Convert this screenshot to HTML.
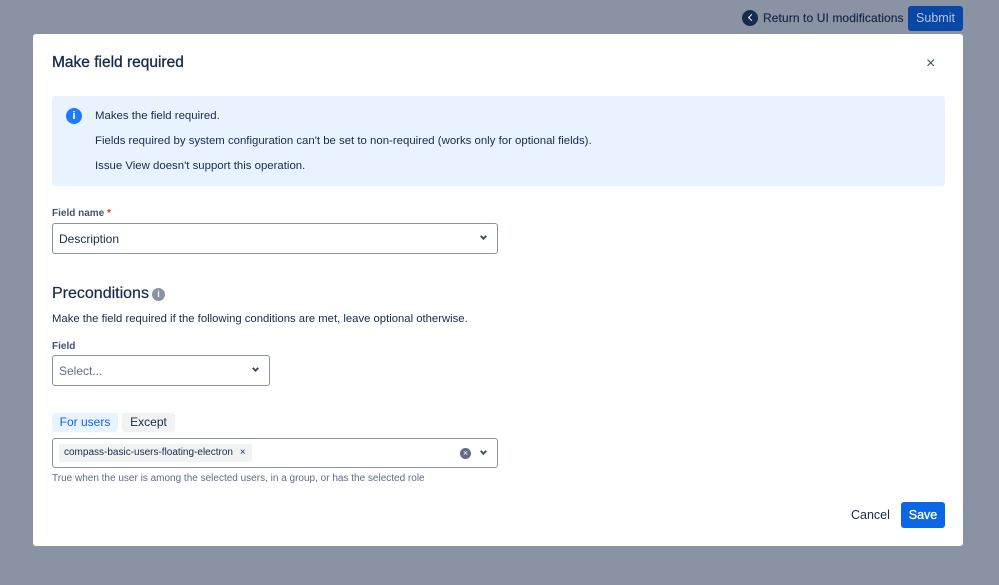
<!DOCTYPE html>
<html><head><style>
*{box-sizing:border-box;margin:0;padding:0}
body{width:999px;height:585px;background:#8993a4;font-family:"Liberation Sans",sans-serif;color:#172b4d;position:relative;overflow:hidden}
.abs{position:absolute}
.modal{left:33px;top:34px;width:930px;height:512px;background:#fff;border-radius:3px}
.sel{border:1px solid #8993a4;border-radius:3px;background:#fff}
.chev{position:absolute;width:5px;height:5px;border-right:2px solid #42526e;border-bottom:2px solid #42526e;transform:rotate(45deg)}
</style></head><body>
<div class="abs" style="left:742px;top:10px;width:16px;height:16px;border-radius:50%;background:#172b4d"></div>
<div class="abs" style="left:749px;top:15px;width:5px;height:5px;border-left:1.6px solid #fff;border-bottom:1.6px solid #fff;transform:rotate(45deg)"></div>
<div class="abs" style="left:763px;top:11px;font-size:12px;color:#172b4d;letter-spacing:0.1px;-webkit-text-stroke:0.2px #172b4d">Return to UI modifications</div>
<div class="abs" style="left:908px;top:6px;width:55px;height:25px;background:#0747a6;border-radius:3px;color:#b3c5e0;font-size:12.5px;text-align:center;line-height:25px">Submit</div>
<div class="abs modal">
 <div class="abs" style="left:19px;top:20px;font-size:15.5px;-webkit-text-stroke:0.35px #172b4d">Make field required</div>
 <div class="abs" style="left:893px;top:21px;font-size:16px;color:#42526e">×</div>
 <div class="abs" style="left:19px;top:62px;width:893px;height:90px;background:#e9f2ff;border-radius:3px">
  <div class="abs" style="left:14px;top:12px;width:16px;height:16px;border-radius:50%;background:#1d7afc;color:#fff;font-size:11px;font-weight:bold;text-align:center;line-height:16px">i</div>
  <div class="abs" style="left:43px;top:8px;font-size:11.4px;line-height:25px">Makes the field required.<br>Fields required by system configuration can't be set to non-required (works only for optional fields).<br>Issue View doesn't support this operation.</div>
 </div>
 <div class="abs" style="left:19px;top:174px;font-size:10px;font-weight:bold;color:#42526e">Field name <span style="color:#de350b">*</span></div>
 <div class="abs sel" style="left:19px;top:189px;width:446px;height:31px"><div class="abs" style="left:6px;top:8px;font-size:12px">Description</div><div class="chev" style="left:428px;top:10px"></div></div>
 <div class="abs" style="left:19px;top:251px;font-size:16px;-webkit-text-stroke:0.2px #172b4d">Preconditions</div>
 <div class="abs" style="left:119px;top:254px;width:13px;height:13px;border-radius:50%;background:#8993a4;color:#fff;font-size:9px;font-weight:bold;text-align:center;line-height:13px">i</div>
 <div class="abs" style="left:19px;top:279px;font-size:11.3px">Make the field required if the following conditions are met, leave optional otherwise.</div>
 <div class="abs" style="left:19px;top:307px;font-size:10px;font-weight:bold;color:#42526e">Field</div>
 <div class="abs sel" style="left:19px;top:321px;width:218px;height:31px"><div class="abs" style="left:6px;top:8px;font-size:12px;color:#5e6c84">Select...</div><div class="chev" style="left:200px;top:10px"></div></div>
 <div class="abs" style="left:19px;top:379px;width:66px;height:19px;background:#e9f2ff;border-radius:3px;color:#0c66e4;font-size:12px;text-align:center;line-height:19px">For users</div>
 <div class="abs" style="left:89px;top:379px;width:53px;height:19px;background:#f1f2f4;border-radius:3px;font-size:12px;text-align:center;line-height:19px">Except</div>
 <div class="abs sel" style="left:19px;top:404px;width:446px;height:30px">
  <div class="abs" style="left:6px;top:5px;width:193px;height:18px;background:#f1f2f4;border-radius:2px;font-size:10px;line-height:18px;padding-left:5px">compass-basic-users-floating-electron <span style="margin-left:4px">×</span></div>
  <div class="abs" style="left:407px;top:9px;width:11px;height:11px;border-radius:50%;background:#5e6c84;color:#fff;font-size:9px;text-align:center;line-height:11px">×</div>
  <div class="chev" style="left:428px;top:10px"></div>
 </div>
 <div class="abs" style="left:19px;top:439px;font-size:10px;color:#5e6c84">True when the user is among the selected users, in a group, or has the selected role</div>
 <div class="abs" style="left:818px;top:474px;font-size:12.5px;color:#172b4d">Cancel</div>
 <div class="abs" style="left:868px;top:468px;width:44px;height:26px;background:#0c66e4;border-radius:3px;color:#fff;font-size:12.5px;-webkit-text-stroke:0.3px #fff;text-align:center;line-height:26px">Save</div>
</div>
</body></html>
